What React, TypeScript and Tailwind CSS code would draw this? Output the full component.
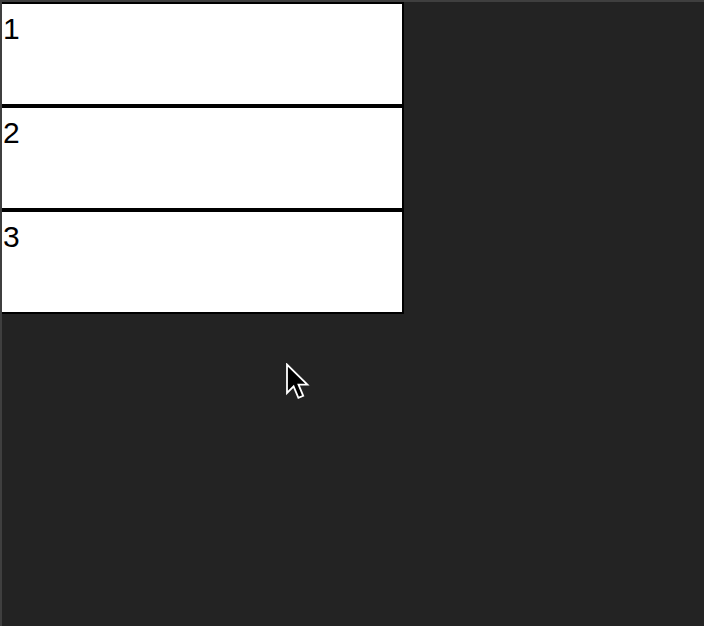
const boxes = ['1', '2', '3'];

const Cursor = () => (
  <svg
    className="absolute left-[283px] top-[361px]"
    width="28"
    height="42"
    viewBox="0 0 28 42"
  >
    <path
      d="M2 1.5 L2 30 L8.6 23.4 L13.4 34.8 L18.2 32.8 L13.5 21.6 L22.4 21.6 Z"
      fill="#000"
      stroke="#fff"
      strokeWidth="1.8"
      strokeLinejoin="miter"
    />
  </svg>
);

export default function App() {
  return (
    <div
      className="relative w-[704px] h-[626px] bg-[#232323] border-t-2 border-l-2 border-[#3f3f3f] overflow-hidden"
      style={{ fontFamily: '"Liberation Sans", Arial, sans-serif' }}
    >
      <div className="flex flex-col w-[402px]">
        {boxes.map((n) => (
          <div
            key={n}
            className="h-[104px] bg-white border-2 border-l-0 border-black text-[30px] leading-[50px] text-black pl-[1px]"
          >
            {n}
          </div>
        ))}
      </div>
      <Cursor />
    </div>
  );
}
